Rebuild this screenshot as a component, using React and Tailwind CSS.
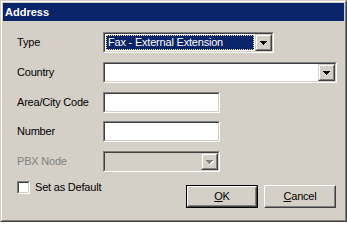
import React from "react";

const FONT = { fontFamily: '"Liberation Sans", Arial, sans-serif' };

function Sunken({ className = "", inner = "", children }) {
  return (
    <div className={`border border-t-[#808080] border-l-[#808080] border-b-white border-r-white ${className}`}>
      <div className={`h-full border border-t-[#404040] border-l-[#404040] border-b-[#d4d0c8] border-r-[#d4d0c8] ${inner}`}>
        {children}
      </div>
    </div>
  );
}

function Arrow({ disabled }) {
  return (
    <svg width="8" height="5" viewBox="0 0 8 5" shapeRendering="crispEdges">
      {disabled && (
        <g fill="#ffffff">
          <rect x="1" y="1" width="7" height="1" />
          <rect x="2" y="2" width="5" height="1" />
          <rect x="3" y="3" width="3" height="1" />
          <rect x="4" y="4" width="1" height="1" />
        </g>
      )}
      <g fill={disabled ? "#808080" : "#000000"}>
        <rect x="0" y="0" width="7" height="1" />
        <rect x="1" y="1" width="5" height="1" />
        <rect x="2" y="2" width="3" height="1" />
        <rect x="3" y="3" width="1" height="1" />
      </g>
    </svg>
  );
}

function ArrowBtn({ disabled }) {
  return (
    <div className="w-[17px] h-full shrink-0 border border-t-[#d4d0c8] border-l-[#d4d0c8] border-b-[#404040] border-r-[#404040]">
      <div className="h-full border border-t-white border-l-white border-b-[#808080] border-r-[#808080] bg-[#d4d0c8] flex items-center justify-center pl-[1px] pt-[1px]">
        <Arrow disabled={disabled} />
      </div>
    </div>
  );
}

function Select({ width, value, disabled, focused }) {
  return (
    <Sunken className={`${width} h-[21px]`} inner={`flex ${disabled ? "bg-[#d4d0c8]" : "bg-white"}`}>
      <div className="flex-1 p-[1px] pr-[1px] flex">
        {focused ? (
          <div className="flex-1 bg-[#0a246a] border border-dotted border-[#f5db95] text-white flex items-center pl-[1px] leading-none">
            {value}
          </div>
        ) : (
          <div className="flex-1" />
        )}
      </div>
      <ArrowBtn disabled={disabled} />
    </Sunken>
  );
}

function Input({ width }) {
  return <Sunken className={`${width} h-[21px]`} inner="bg-white" />;
}

function Row({ label, disabled, mt, children }) {
  return (
    <div className={`flex items-center ${mt}`}>
      <div className={`w-[86px] ${disabled ? "text-[#808080]" : "text-black"}`}>{label}</div>
      {children}
    </div>
  );
}

function Button({ children, isDefault }) {
  const body = (
    <div className="h-full border border-t-white border-l-white border-b-[#404040] border-r-[#404040]">
      <div className="h-full border border-t-[#d4d0c8] border-l-[#d4d0c8] border-b-[#808080] border-r-[#808080] bg-[#d4d0c8] flex items-center justify-center">
        {children}
      </div>
    </div>
  );
  return isDefault ? (
    <div className="w-[72px] h-[23px] border border-black">{body}</div>
  ) : (
    <div className="w-[72px] h-[23px]">{body}</div>
  );
}

export default function App() {
  return (
    <div
      className="w-[347px] h-[222px] bg-[#d4d0c8] text-[11px] tracking-[-0.2px] border border-t-[#d4d0c8] border-l-[#d4d0c8] border-b-[#404040] border-r-[#404040] overflow-hidden"
      style={FONT}
    >
      <div className="h-full border border-t-white border-l-white border-b-[#808080] border-r-[#808080]">
        <div className="h-full border border-[#d4d0c8] flex flex-col">
          <div className="h-[18px] bg-[#0a246a] text-white font-bold flex items-center pl-[2px] leading-none tracking-normal">
            Address
          </div>
          <div className="pl-[14px] flex flex-col">
            <Row label="Type" mt="mt-[11px]">
              <Select width="w-[171px]" value="Fax - External Extension" focused />
            </Row>
            <Row label="Country" mt="mt-[9px]">
              <Select width="w-[234px]" />
            </Row>
            <Row label="Area/City Code" mt="mt-[9px]">
              <Input width="w-[117px]" />
            </Row>
            <Row label="Number" mt="mt-[8px]">
              <Input width="w-[117px]" />
            </Row>
            <Row label="PBX Node" mt="mt-[9px]" disabled>
              <Select width="w-[117px]" disabled />
            </Row>
            <div className="flex mt-[9px]">
              <div className="flex items-center h-[13px] gap-[5px] w-[169px]">
                <Sunken className="w-[13px] h-[13px]" inner="bg-white" />
                <span>Set as Default</span>
              </div>
              <div className="flex gap-[6px] mt-[4px]">
                <Button isDefault>
                  <span><span className="underline">O</span>K</span>
                </Button>
                <Button>
                  <span><span className="underline">C</span>ancel</span>
                </Button>
              </div>
            </div>
          </div>
        </div>
      </div>
    </div>
  );
}
